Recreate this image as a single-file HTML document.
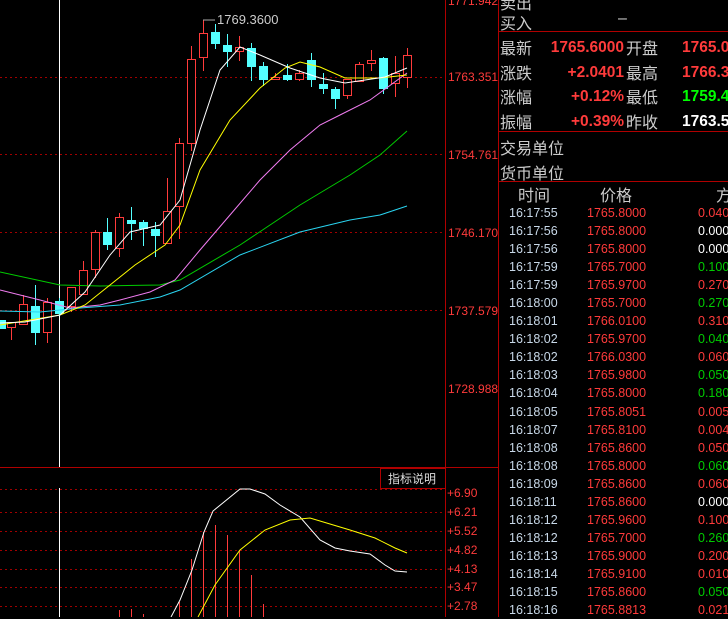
<!DOCTYPE html>
<html><head><meta charset="utf-8"><style>
body{margin:0;background:#000;width:728px;height:617px;overflow:hidden;position:relative;font-family:"Liberation Sans","Noto Sans CJK SC",sans-serif}
svg{position:absolute;left:0;top:0}
.t{position:absolute;white-space:nowrap}
</style></head><body>
<svg width="728" height="617" viewBox="0 0 728 617">
<g stroke="#a00000" stroke-dasharray="2,3" stroke-width="1">
<line x1="0" y1="77.5" x2="445" y2="77.5"/><line x1="0" y1="154.5" x2="445" y2="154.5"/><line x1="0" y1="232.5" x2="445" y2="232.5"/><line x1="0" y1="310.5" x2="445" y2="310.5"/>
<line x1="0" y1="489.5" x2="445" y2="489.5"/><line x1="0" y1="512.5" x2="445" y2="512.5"/><line x1="0" y1="531.5" x2="445" y2="531.5"/><line x1="0" y1="550.5" x2="445" y2="550.5"/><line x1="0" y1="569.5" x2="445" y2="569.5"/><line x1="0" y1="587.5" x2="445" y2="587.5"/><line x1="0" y1="606.5" x2="445" y2="606.5"/>
</g>
<g stroke="#b00000" stroke-width="1">
<line x1="445.5" y1="0" x2="445.5" y2="617"/><line x1="498.5" y1="0" x2="498.5" y2="617"/>
<line x1="0" y1="467.5" x2="498" y2="467.5"/>
<line x1="498" y1="31.5" x2="728" y2="31.5"/><line x1="498" y1="131.5" x2="728" y2="131.5"/><line x1="498" y1="181.5" x2="728" y2="181.5"/>
<rect x="380.5" y="468.5" width="65" height="20" fill="none"/>
</g>
<g stroke="#fff"><line x1="59.5" y1="0" x2="59.5" y2="467"/><line x1="59.5" y1="488" x2="59.5" y2="617"/></g>
<g stroke-width="1">
<g stroke="#ff3b3b" fill="#000">
<line x1="11.5" y1="322" x2="11.5" y2="340"/><rect x="7.5" y="322.5" width="8" height="5"/>
<line x1="23.5" y1="295" x2="23.5" y2="324"/><rect x="19.5" y="304.5" width="8" height="20"/>
<line x1="47.5" y1="298" x2="47.5" y2="343"/><rect x="43.5" y="302.5" width="8" height="30"/>
<line x1="71.5" y1="292" x2="71.5" y2="312"/><rect x="67.5" y="287.5" width="8" height="19"/>
<line x1="83.5" y1="261" x2="83.5" y2="294"/><rect x="79.5" y="270.5" width="8" height="24"/>
<line x1="95.5" y1="230" x2="95.5" y2="278"/><rect x="91.5" y="232.5" width="8" height="37"/>
<line x1="119.5" y1="213" x2="119.5" y2="257"/><rect x="115.5" y="217.5" width="8" height="31"/>
<line x1="167.5" y1="178" x2="167.5" y2="243"/><rect x="163.5" y="211.5" width="8" height="32"/>
<line x1="179.5" y1="138" x2="179.5" y2="239"/><rect x="175.5" y="143.5" width="8" height="63"/>
<line x1="191.5" y1="46" x2="191.5" y2="151"/><rect x="187.5" y="59.5" width="8" height="84"/>
<line x1="203.5" y1="20" x2="203.5" y2="71"/><rect x="199.5" y="33.5" width="8" height="24"/>
<line x1="239.5" y1="36" x2="239.5" y2="61"/><rect x="235.5" y="47.5" width="8" height="4"/>
<line x1="275.5" y1="73" x2="275.5" y2="80"/><rect x="271.5" y="77.5" width="8" height="2"/>
<line x1="299.5" y1="70" x2="299.5" y2="81"/><rect x="295.5" y="73.5" width="8" height="6"/>
<line x1="347.5" y1="79" x2="347.5" y2="99"/><rect x="343.5" y="79.5" width="8" height="16"/>
<line x1="359.5" y1="62" x2="359.5" y2="81"/><rect x="355.5" y="64.5" width="8" height="17"/>
<line x1="371.5" y1="50" x2="371.5" y2="71"/><rect x="367.5" y="60.5" width="8" height="3"/>
<line x1="395.5" y1="56" x2="395.5" y2="97"/><rect x="391.5" y="73.5" width="8" height="10"/>
<line x1="407.5" y1="48" x2="407.5" y2="88"/><rect x="403.5" y="55.5" width="8" height="22"/>
</g>
<g stroke="#54ffff" fill="#54ffff">
<rect x="-2.5" y="320.5" width="8" height="8"/>
<line x1="35.5" y1="285" x2="35.5" y2="345"/><rect x="31.5" y="306.5" width="8" height="26"/>
<line x1="59.5" y1="298" x2="59.5" y2="316"/><rect x="55.5" y="301.5" width="8" height="12"/>
<line x1="107.5" y1="218" x2="107.5" y2="250"/><rect x="103.5" y="232.5" width="8" height="12"/>
<line x1="131.5" y1="207" x2="131.5" y2="240"/><rect x="127.5" y="220.5" width="8" height="3"/>
<line x1="143.5" y1="220" x2="143.5" y2="246"/><rect x="139.5" y="222.5" width="8" height="6"/>
<line x1="155.5" y1="222" x2="155.5" y2="257"/><rect x="151.5" y="229.5" width="8" height="6"/>
<line x1="215.5" y1="24" x2="215.5" y2="49"/><rect x="211.5" y="32.5" width="8" height="11"/>
<line x1="227.5" y1="34" x2="227.5" y2="67"/><rect x="223.5" y="45.5" width="8" height="6"/>
<line x1="251.5" y1="43" x2="251.5" y2="81"/><rect x="247.5" y="48.5" width="8" height="18"/>
<line x1="263.5" y1="62" x2="263.5" y2="86"/><rect x="259.5" y="66.5" width="8" height="13"/>
<line x1="287.5" y1="64" x2="287.5" y2="81"/><rect x="283.5" y="75.5" width="8" height="4"/>
<line x1="311.5" y1="53" x2="311.5" y2="87"/><rect x="307.5" y="60.5" width="8" height="19"/>
<line x1="323.5" y1="73" x2="323.5" y2="94"/><rect x="319.5" y="84.5" width="8" height="4"/>
<line x1="335.5" y1="87" x2="335.5" y2="109"/><rect x="331.5" y="89.5" width="8" height="9"/>
<line x1="383.5" y1="57" x2="383.5" y2="94"/><rect x="379.5" y="58.5" width="8" height="30"/>
</g>
</g>
<g fill="none" stroke-width="1">
<polyline stroke="#0c0" points="0,272 60,285 100,286 160,285 180,280 240,245 300,205 350,175 380,155 407,131"/>
<polyline stroke="#2ad4f0" points="0,311 40,312 80,308 120,305 160,297 180,290 240,255 300,232 350,220 380,215 407,206"/>
<polyline stroke="#f07cf0" points="0,290 40,300 70,308 100,305 120,300 150,292 175,280 200,250 230,215 260,180 290,150 320,125 340,115 370,100 407,73"/>
<polyline stroke="#ffff00" points="0,325 60,315 85,305 110,285 135,265 165,245 180,225 200,170 230,120 260,88 285,68 300,62 320,67 345,78 380,78 407,75"/>
<polyline stroke="#fff" points="0,323 25,322 60,315 85,292 110,255 130,232 160,225 180,200 200,130 220,70 240,47 260,55 290,68 320,78 345,83 365,80 385,77 407,68"/>
<polyline stroke="#aaa" points="203,20 215,20"/>
</g>
<g stroke="#ff3b3b" stroke-width="1">
<line x1="119.5" y1="610" x2="119.5" y2="617"/><line x1="131.5" y1="609" x2="131.5" y2="617"/><line x1="143.5" y1="614" x2="143.5" y2="617"/>
<line x1="179.5" y1="602" x2="179.5" y2="617"/><line x1="191.5" y1="559" x2="191.5" y2="617"/><line x1="203.5" y1="532" x2="203.5" y2="617"/>
<line x1="215.5" y1="525" x2="215.5" y2="617"/><line x1="227.5" y1="535" x2="227.5" y2="617"/><line x1="239.5" y1="550" x2="239.5" y2="617"/>
<line x1="251.5" y1="575" x2="251.5" y2="617"/><line x1="263.5" y1="604" x2="263.5" y2="617"/>
</g>
<g fill="none">
<polyline stroke="#fff" points="171,617 180,600 192,570 204,532 213,511 240,489 250,489 265,494 280,505 300,517 320,540 335,548 350,551 370,554 385,565 395,571 407,572"/>
<polyline stroke="#ffff00" points="198,617 215,585 240,550 265,530 290,520 310,518 330,524 350,530 375,538 395,548 407,553"/>
</g>
<g font-family="Liberation Sans, sans-serif" font-size="12" fill="#ff3b3b">
<text x="448" y="5">1771.942</text>
<text x="448" y="81">1763.351</text><text x="448" y="159">1754.761</text><text x="448" y="237">1746.170</text><text x="448" y="315">1737.579</text><text x="448" y="393">1728.988</text>
<text x="447" y="497">+6.90</text><text x="447" y="516">+6.21</text><text x="447" y="535">+5.52</text><text x="447" y="554">+4.82</text><text x="447" y="573">+4.13</text><text x="447" y="591">+3.47</text><text x="447" y="610">+2.78</text>
</g>
<text x="217" y="24" font-family="Liberation Sans, sans-serif" font-size="13" fill="#ccc">1769.3600</text>
<text x="388" y="483" font-family="Liberation Sans, Noto Sans CJK SC, sans-serif" font-size="12" fill="#ddd">指标说明</text>
</svg>
<div style="position:absolute;left:500px;top:0;width:228px;font-size:16px;color:#ccc">
<div class="t" style="top:-10px;left:0">卖出</div>
<div class="t" style="top:10px;left:0">买入</div>
<div class="t" style="top:10px;left:118px">–</div>
<div class="t" style="top:35px;left:0">最新</div><div class="t" style="top:60px;left:0">涨跌</div><div class="t" style="top:84px;left:0">涨幅</div><div class="t" style="top:109px;left:0">振幅</div>
<div class="t" style="top:35px;left:126px">开盘</div><div class="t" style="top:60px;left:126px">最高</div><div class="t" style="top:84px;left:126px">最低</div><div class="t" style="top:109px;left:126px">昨收</div>
<div style="position:absolute;top:36px;right:104px;font-size:15.5px;font-weight:bold;color:#ff3b3b;text-align:right;line-height:24.5px;font-family:'Liberation Sans',sans-serif">1765.6000<br>+2.0401<br>+0.12%<br><span>+0.39%</span></div>
<div style="position:absolute;top:36px;left:182px;font-size:15.5px;font-weight:bold;line-height:24.5px;font-family:'Liberation Sans',sans-serif;white-space:nowrap"><span style="color:#ff3b3b">1765.0000</span><br><span style="color:#ff3b3b">1766.3500</span><br><span style="color:#0f0">1759.4000</span><br><span style="color:#fff">1763.5599</span></div>
<div class="t" style="top:135px;left:0">交易单位</div><div class="t" style="top:160px;left:0">货币单位</div>
<div class="t" style="top:182px;left:18px">时间</div><div class="t" style="top:182px;left:100px">价格</div><div class="t" style="top:182px;left:216px">方</div>
</div>
<div style="position:absolute;left:509px;top:204px;font-size:12.5px;line-height:18.05px;font-family:'Liberation Sans',sans-serif;white-space:nowrap">
<div style="position:absolute;left:0;color:#c8d8e8">16:17:55<br>16:17:56<br>16:17:56<br>16:17:59<br>16:17:59<br>16:18:00<br>16:18:01<br>16:18:02<br>16:18:02<br>16:18:03<br>16:18:04<br>16:18:05<br>16:18:07<br>16:18:08<br>16:18:08<br>16:18:09<br>16:18:11<br>16:18:12<br>16:18:12<br>16:18:13<br>16:18:14<br>16:18:15<br>16:18:16</div>
<div style="position:absolute;left:78px;color:#ff3b3b">1765.8000<br>1765.8000<br>1765.8000<br>1765.7000<br>1765.9700<br>1765.7000<br>1766.0100<br>1765.9700<br>1766.0300<br>1765.9800<br>1765.8000<br>1765.8051<br>1765.8100<br>1765.8600<br>1765.8000<br>1765.8600<br>1765.8600<br>1765.9600<br>1765.7000<br>1765.9000<br>1765.9100<br>1765.8600<br>1765.8813</div>
<div style="position:absolute;left:189px"><span style="color:#ff3b3b">0.0400</span><br><span style="color:#fff">0.0000</span><br><span style="color:#fff">0.0000</span><br><span style="color:#0c0">0.1000</span><br><span style="color:#ff3b3b">0.2700</span><br><span style="color:#0c0">0.2700</span><br><span style="color:#ff3b3b">0.3100</span><br><span style="color:#0c0">0.0400</span><br><span style="color:#ff3b3b">0.0600</span><br><span style="color:#0c0">0.0500</span><br><span style="color:#0c0">0.1800</span><br><span style="color:#ff3b3b">0.0050</span><br><span style="color:#ff3b3b">0.0040</span><br><span style="color:#ff3b3b">0.0500</span><br><span style="color:#0c0">0.0600</span><br><span style="color:#ff3b3b">0.0600</span><br><span style="color:#fff">0.0000</span><br><span style="color:#ff3b3b">0.1000</span><br><span style="color:#0c0">0.2600</span><br><span style="color:#ff3b3b">0.2000</span><br><span style="color:#ff3b3b">0.0100</span><br><span style="color:#0c0">0.0500</span><br><span style="color:#ff3b3b">0.0210</span></div>
</div>
</body></html>
